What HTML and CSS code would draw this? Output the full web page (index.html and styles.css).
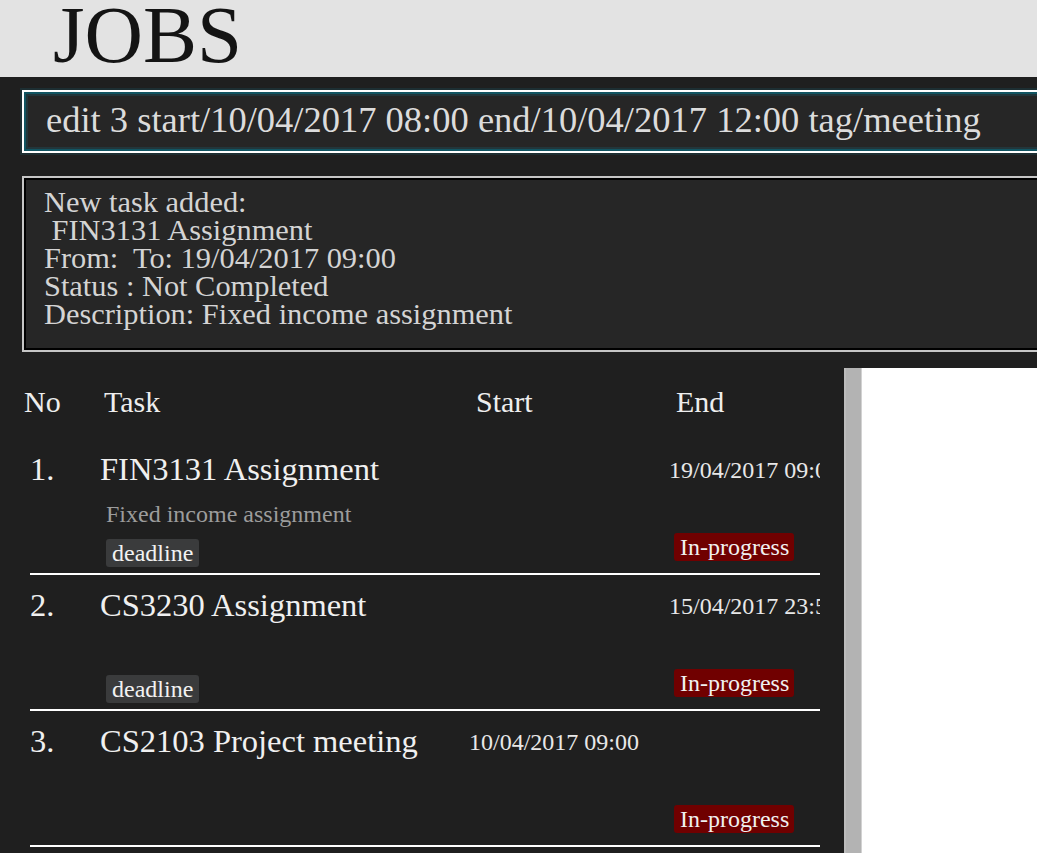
FILE: index.html
```html
<!DOCTYPE html>
<html lang="en">
<head>
<meta charset="utf-8">
<title>JOBS</title>
<link rel="stylesheet" href="styles.css">
</head>
<body>
<header class="title-bar">
  <h1 class="app-title">JOBS</h1>
</header>

<div class="command-box">edit 3 start/10/04/2017 08:00 end/10/04/2017 12:00 tag/meeting</div>

<div class="result-box">
<div class="result-line">New task added:</div>
<div class="result-line"> FIN3131 Assignment</div>
<div class="result-line">From:  To: 19/04/2017 09:00</div>
<div class="result-line">Status : Not Completed</div>
<div class="result-line">Description: Fixed income assignment</div>
</div>

<main class="main-split">
  <section class="task-panel">
    <div class="list-header">
      <span>No</span>
      <span>Task</span>
      <span>Start</span>
      <span>End</span>
    </div>

    <div class="task-row">
      <div class="cell-num">1.</div>
      <div class="cell-title">FIN3131 Assignment</div>
      <div class="cell-start"></div>
      <div class="cell-end">19/04/2017 09:00</div>
      <div class="cell-details">
        <div class="task-desc">Fixed income assignment</div>
        <span class="tag">deadline</span>
      </div>
      <div class="cell-status"><span class="badge">In-progress</span></div>
    </div>

    <div class="task-row">
      <div class="cell-num">2.</div>
      <div class="cell-title">CS3230 Assignment</div>
      <div class="cell-start"></div>
      <div class="cell-end">15/04/2017 23:59</div>
      <div class="cell-details">
        <div class="task-desc"></div>
        <span class="tag">deadline</span>
      </div>
      <div class="cell-status"><span class="badge">In-progress</span></div>
    </div>

    <div class="task-row">
      <div class="cell-num">3.</div>
      <div class="cell-title">CS2103 Project meeting</div>
      <div class="cell-start">10/04/2017 09:00</div>
      <div class="cell-end"></div>
      <div class="cell-details">
        <div class="task-desc"></div>
        <span class="tag tag-empty"></span>
      </div>
      <div class="cell-status"><span class="badge">In-progress</span></div>
    </div>
  </section>
  <div class="split-divider"></div>
  <div class="browser-pane"></div>
</main>
</body>
</html>
```

FILE: styles.css
```css
html, body {
  margin: 0;
  padding: 0;
}

body {
  width: 1037px;
  height: 853px;
  overflow: hidden;
  background: #1f1f1f;
  font-family: "Liberation Serif", "Times New Roman", serif;
  color: #e8e8e8;
}

.title-bar {
  height: 77px;
  background: #e3e3e3;
  box-sizing: border-box;
  padding-left: 53px;
}

.app-title {
  margin: 0;
  font-family: "Liberation Serif", serif;
  font-weight: normal;
  font-size: 81px;
  line-height: 71px;
  color: #141414;
}

.command-box {
  margin: 13px -40px 0 22px;
  height: 63px;
  box-sizing: border-box;
  border: 2px solid #ffffff;
  box-shadow: inset 0 0 0 2px #125562, inset 0 0 0 4px #22363b, 0 0 0 2px #1d2e32;
  background: #262626;
  padding: 0 0 3px 22px;
  font-size: 36.5px;
  line-height: 56px;
  color: #dcdcdc;
  white-space: pre;
  overflow: hidden;
}

.result-box {
  margin: 23px -40px 0 22px;
  height: 176px;
  box-sizing: border-box;
  border: 2px solid #c6c6c6;
  box-shadow: inset 0 0 0 2px #000000;
  background: #262626;
  padding: 10px 0 0 20px;
  font-size: 30.4px;
  line-height: 28px;
  color: #d4d4d4;
}

.result-line {
  white-space: pre;
}

.main-split {
  margin-top: 16px;
  height: 485px;
  display: flex;
}

.task-panel {
  width: 844px;
  background: #1f1f1f;
  overflow: hidden;
}

.split-divider {
  width: 18px;
  background: #b3b3b3;
  border-left: 2px solid #bcbcbc;
  border-right: 1px solid #d2d2d2;
  box-sizing: border-box;
}

.browser-pane {
  flex: 1;
  background: #ffffff;
}

.list-header {
  display: grid;
  grid-template-columns: 80px 372px 200px 1fr;
  padding: 14px 0 0 24px;
  height: 40px;
  margin-bottom: 17px;
  font-size: 30px;
  line-height: 40px;
  color: #eeeeee;
}

.task-row {
  margin-left: 30px;
  width: 790px;
  height: 136px;
  box-sizing: border-box;
  border-bottom: 2px solid #ffffff;
  display: grid;
  grid-template-columns: 70px 369px 200px 151px;
  grid-template-rows: 48px 86px;
}

.cell-num,
.cell-title {
  padding-top: 12px;
  font-size: 32.5px;
  line-height: 36px;
  color: #f0f0f0;
  white-space: nowrap;
}

.cell-num {
  padding-left: 0;
}

.cell-start,
.cell-end {
  padding-top: 11px;
  font-size: 24px;
  line-height: 40px;
  color: #e8e8e8;
  white-space: nowrap;
  overflow: hidden;
}

.cell-details {
  grid-column: 2;
  grid-row: 2;
  padding-left: 6px;
  padding-top: 13px;
}

.task-desc {
  height: 28px;
  margin-bottom: 11px;
  font-size: 24px;
  line-height: 28px;
  color: #9c9c9c;
}

.tag {
  display: inline-block;
  height: 28px;
  padding: 0 6px;
  border-radius: 3px;
  background: #3a3b3c;
  font-size: 24px;
  line-height: 29px;
  color: #f2f2f2;
}

.tag-empty {
  visibility: hidden;
}

.cell-status {
  grid-column: 4;
  grid-row: 2;
  padding-left: 5px;
  padding-top: 46px;
}

.badge {
  display: inline-block;
  height: 28px;
  padding: 0 5px 0 6px;
  border-radius: 3px;
  background: #700000;
  font-size: 24px;
  line-height: 28px;
  color: #f0f0f0;
}
```
